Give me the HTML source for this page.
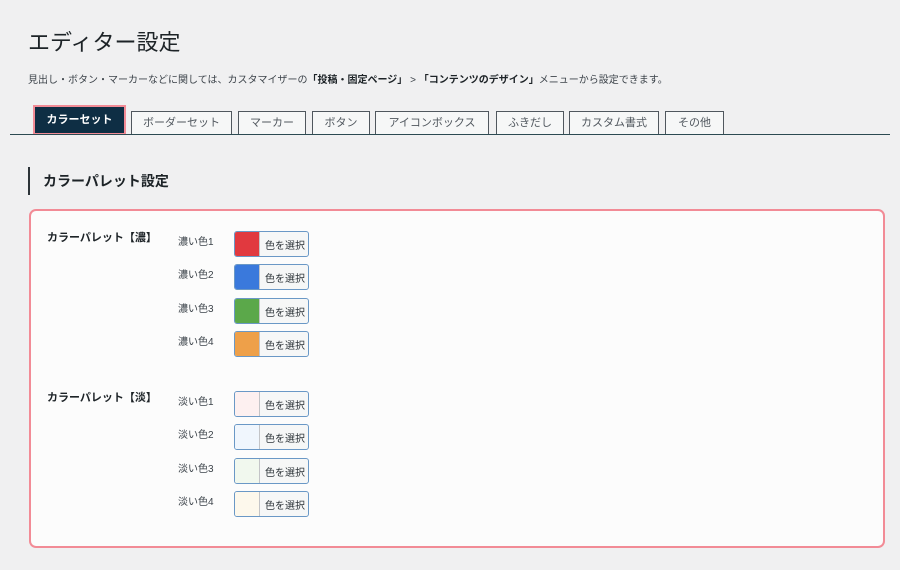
<!DOCTYPE html>
<html><head><meta charset="utf-8"><style>
*{box-sizing:border-box;margin:0;padding:0}
body{width:900px;height:570px;background:#f0f0f1;font-family:"Liberation Sans","Noto Sans CJK JP",sans-serif;color:#1d2327;position:relative;overflow:hidden}
.a{position:absolute;white-space:nowrap}
h1{position:absolute;left:28px;top:25px;font-size:22px;font-weight:400;color:#1d2327}
.desc{left:28px;top:71px;font-size:10px;color:#3c434a}
.desc b{color:#1d2327}
.line{left:10px;top:134px;width:880px;height:1px;background:#2c4a52}
.tab{position:absolute;top:111px;height:24px;border:1px solid #50575e;border-bottom:none;background:#f6f7f7;font-size:11px;color:#50575e;text-align:center;line-height:22px}
.tab.on{top:105px;height:30px;background:#0e2e44;color:#fff;font-weight:700;border:2px solid #f28b96;line-height:26px}
.h2{left:28px;top:167px;height:28px;border-left:2px solid #2c3338;padding-left:13px;font-size:14px;font-weight:700;line-height:28px}
.panel{position:absolute;left:29px;top:209px;width:856px;height:339px;border:2px solid #f28b96;border-radius:7px;background:#fcfcfc}
.gl{font-size:11px;font-weight:700;left:47px}
.rl{font-size:10px;color:#3c434a;left:178px}
.btn{position:absolute;left:234px;width:75px;height:26px;border:1px solid #6a98c6;border-radius:3px;background:#f6f7f7;overflow:hidden;font-size:10px;color:#2c3338}
.btn i{position:absolute;left:0;top:0;bottom:0;width:25px;border-right:1px solid #c3c4c7}
.btn span{position:absolute;left:30px;top:5px}
</style></head><body>
<h1>エディター設定</h1>
<div class="a desc">見出し・ボタン・マーカーなどに関しては、カスタマイザーの<b>「投稿・固定ページ」</b> &gt; <b>「コンテンツのデザイン」</b>メニューから設定できます。</div>
<div class="tab on" style="left:33px;width:93px">カラーセット</div>
<div class="tab" style="left:131px;width:101px">ボーダーセット</div>
<div class="tab" style="left:238px;width:68px">マーカー</div>
<div class="tab" style="left:312px;width:58px">ボタン</div>
<div class="tab" style="left:375px;width:114px">アイコンボックス</div>
<div class="tab" style="left:496px;width:68px">ふきだし</div>
<div class="tab" style="left:569px;width:90px">カスタム書式</div>
<div class="tab" style="left:665px;width:59px">その他</div>
<div class="a line"></div>
<div class="a h2">カラーパレット設定</div>
<div class="panel"></div>
<div class="a gl" style="top:229px">カラーパレット【濃】</div>
<div class="a gl" style="top:389px">カラーパレット【淡】</div>
<div class="a rl" style="top:233px">濃い色1</div>
<div class="a rl" style="top:266px">濃い色2</div>
<div class="a rl" style="top:300px">濃い色3</div>
<div class="a rl" style="top:333px">濃い色4</div>
<div class="a rl" style="top:393px">淡い色1</div>
<div class="a rl" style="top:426px">淡い色2</div>
<div class="a rl" style="top:460px">淡い色3</div>
<div class="a rl" style="top:493px">淡い色4</div>
<div class="btn" style="top:231px"><i style="background:#e1393f"></i><span>色を選択</span></div>
<div class="btn" style="top:264px"><i style="background:#3a79dc"></i><span>色を選択</span></div>
<div class="btn" style="top:298px"><i style="background:#5ba84a"></i><span>色を選択</span></div>
<div class="btn" style="top:331px"><i style="background:#eea049"></i><span>色を選択</span></div>
<div class="btn" style="top:391px"><i style="background:#fdf0f0"></i><span>色を選択</span></div>
<div class="btn" style="top:424px"><i style="background:#f0f6fd"></i><span>色を選択</span></div>
<div class="btn" style="top:458px"><i style="background:#f1f8ee"></i><span>色を選択</span></div>
<div class="btn" style="top:491px"><i style="background:#fdf8ec"></i><span>色を選択</span></div>
</body></html>
